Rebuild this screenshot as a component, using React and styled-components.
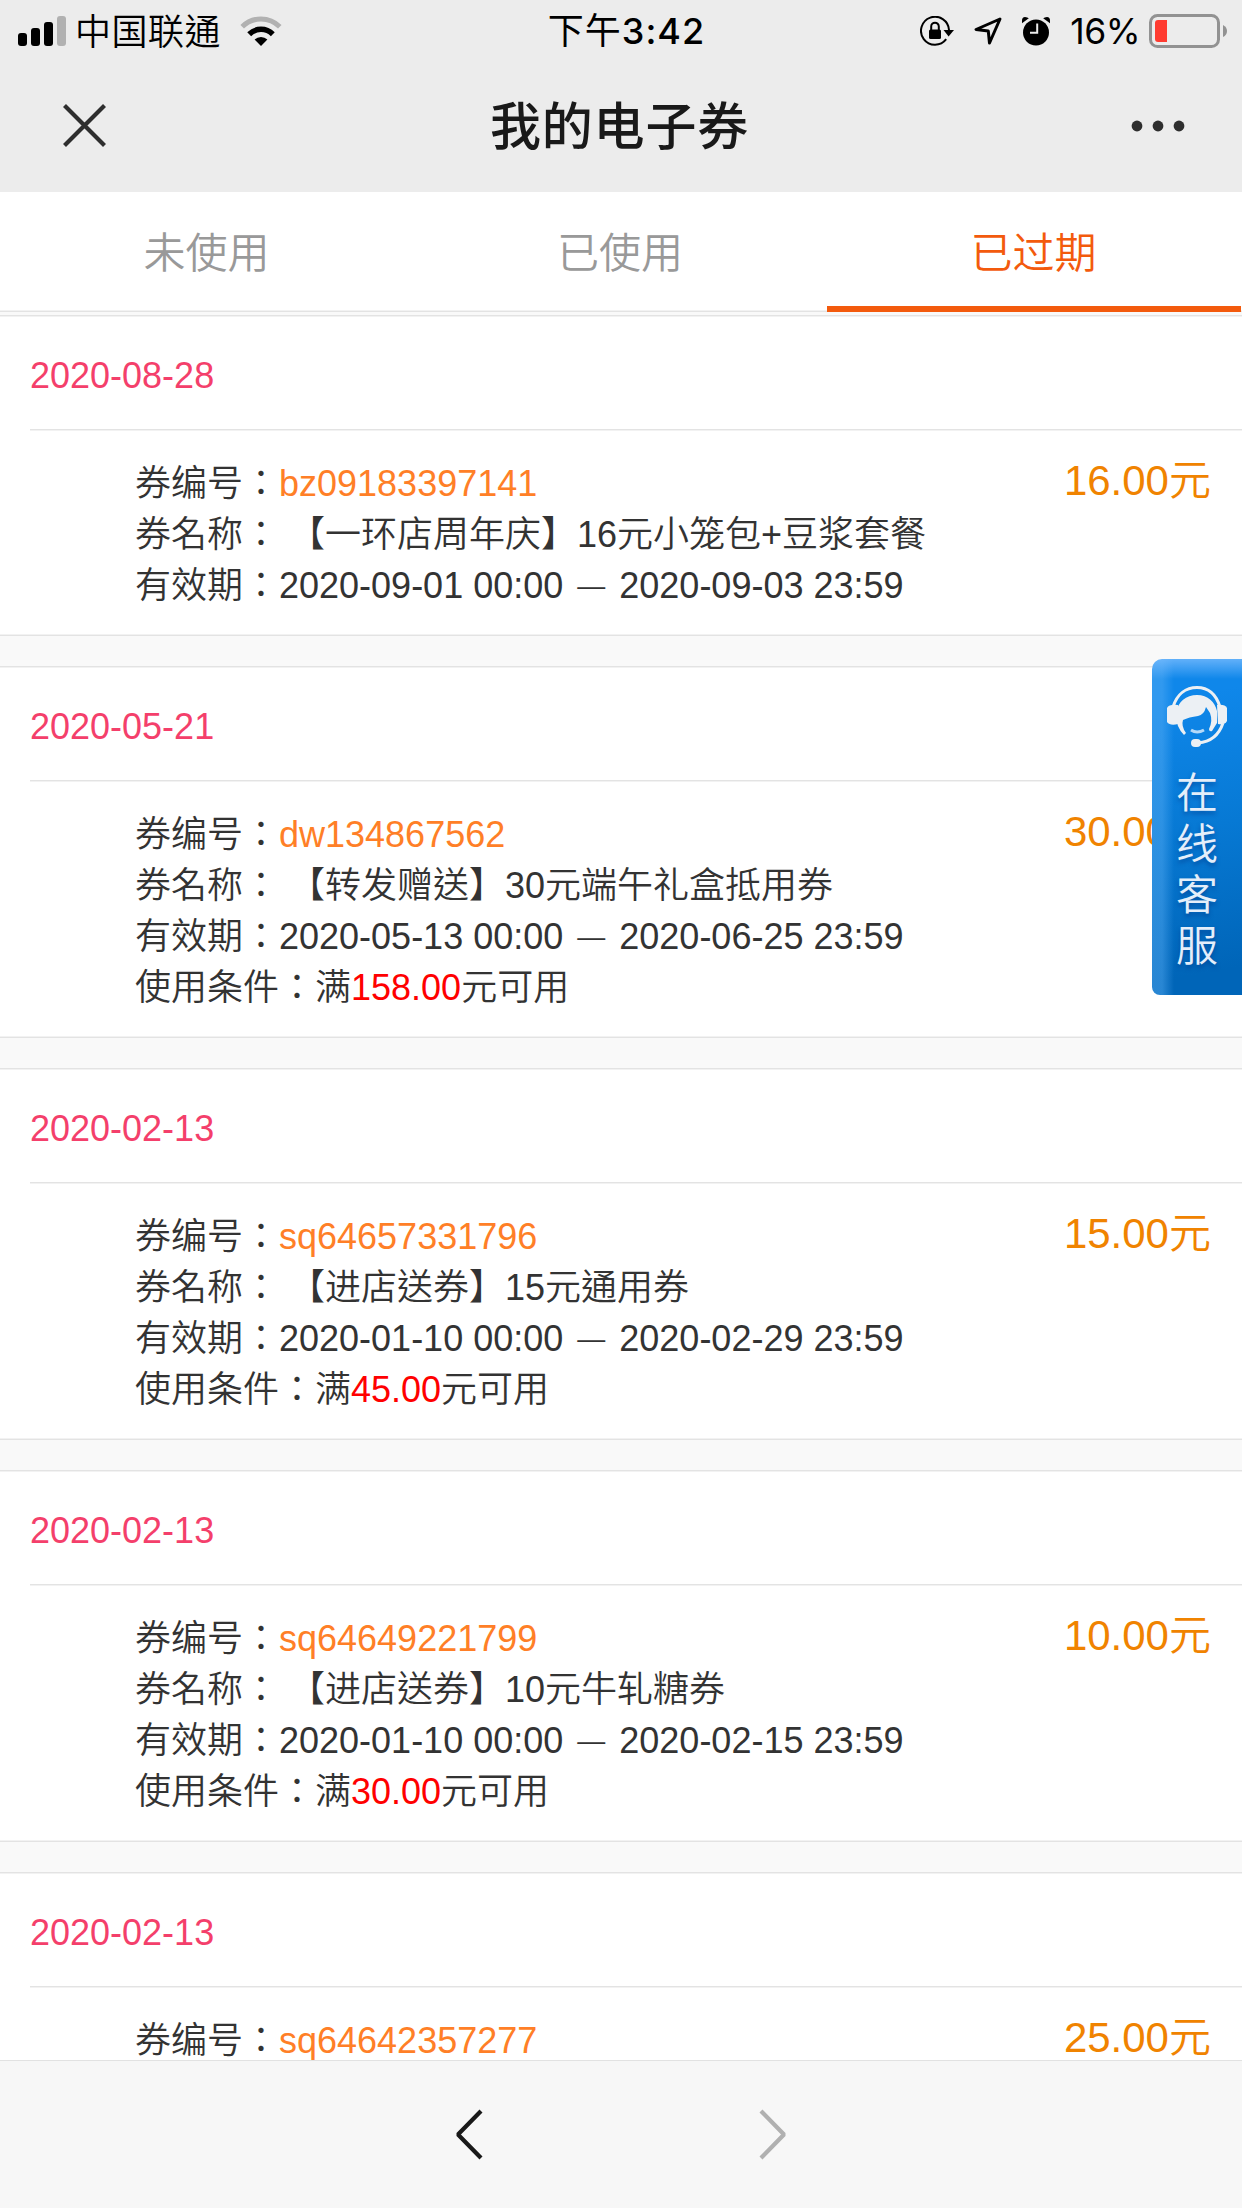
import React from 'react';
import styled, { createGlobalStyle, css } from 'styled-components';

const GlobalStyle = createGlobalStyle`
  * {
    box-sizing: border-box;
  }

  body {
    margin: 0;
    background-color: #f9f9f9;
    color: #333;
    font-family: "Liberation Sans", "Noto Sans CJK TC", sans-serif;
    font-weight: 350;
  }
`;

const Page = styled.div`
  position: relative;
  display: flex;
  flex-direction: column;
  width: 1242px;
  height: 2208px;
  overflow: hidden;
`;

const Header = styled.header`
  flex-shrink: 0;
  height: 192px;
  background-color: #ececec;
`;

const StatusBar = styled.div`
  display: grid;
  grid-template-columns: 1fr auto 1fr;
  align-items: center;
  height: 60px;
  padding: 0 15px 0 18px;
  color: #000;
  font-family: Inter, "Noto Sans CJK TC", sans-serif;
  font-size: 36px;
  font-weight: 400;
  line-height: 60px;
`;

const StatusGroup = styled.div`
  display: flex;
  align-items: center;
  justify-content: ${props => props.$end ? 'flex-end' : 'flex-start'};
`;

const StatusIcons = styled.div`
  display: flex;
  align-items: center;
  gap: 20px;
`;

const Carrier = styled.span`
  margin: 0 19px 0 9px;
  padding-top: 1px;
  font-weight: 350;
  letter-spacing: 0.5px;
`;

const Clock = styled.span`
  padding-left: 8px;
  font-weight: 400;
  letter-spacing: 1px;

  b {
    font-weight: 500;
  }
`;

const Percent = styled.span`
  margin: 0 9px 0 20px;
  padding-top: 2px;
  font-size: 35.5px;
  letter-spacing: -0.5px;
`;

const NavBar = styled.div`
  display: flex;
  align-items: center;
  justify-content: space-between;
  height: 132px;
  padding: 0 57px 0 63px;
`;

const Title = styled.h1`
  margin: 0;
  padding: 3px 0 0 2px;
  color: #191919;
  font-size: 51px;
  font-weight: 500;
  letter-spacing: 0.8px;
  line-height: 129px;
`;

const IconButton = styled.button`
  display: flex;
  padding: 0;
  border: 0;
  background: none;
`;

const Tabs = styled.nav`
  display: flex;
  flex-shrink: 0;
  height: 120px;
  margin-bottom: 3px;
  background-color: #fff;
  box-shadow: inset 0 -1px #e3e3e3, inset 0 -2px #f2f2f2;
`;

const Tab = styled.a`
  width: 414px;
  color: #999;
  font-size: 42px;
  line-height: 123px;
  text-align: center;

  &:first-child {
    width: 413px;
  }

  ${props => props.$active && css`
    padding-right: 1px;
    color: #f35a0d;
    box-shadow: inset 0 -6px #f35a0d;
  `}
`;

const List = styled.main`
  flex: 1;
  min-height: 0;
  overflow: hidden;
`;

const Card = styled.section`
  margin-bottom: 30px;
  padding-left: 30px;
  background-color: #fff;
  box-shadow: inset 0 1px #e3e3e3, inset 0 2px #f2f2f2,
    inset 0 -1px #e3e3e3, inset 0 -2px #f2f2f2;
`;

const CardDate = styled.h2`
  height: 114px;
  margin: 0;
  color: #f43f6b;
  font-size: 36px;
  font-weight: 400;
  line-height: 121px;
`;

const CardBody = styled.div`
  display: flex;
  justify-content: space-between;
  padding: 29px 31px 25px 105px;
  box-shadow: inset 0 1px #e3e3e3, inset 0 2px #f2f2f2;
`;

const Fields = styled.div`
  font-size: 36px;
  line-height: 51px;
`;

const Field = styled.div`
  height: 51px;
  white-space: pre;
`;

const Code = styled.span`
  color: #ff7f27;
`;

const Limit = styled.span`
  color: #f00;
`;

const Dash = styled.span`
  margin: 0 4px;
  font-size: 28px;
  line-height: 0;
  vertical-align: 3px;
`;

const Price = styled.div`
  height: 51px;
  color: #f08300;
  font-size: 42px;
  line-height: 46px;
  white-space: nowrap;
`;

const Service = styled.aside`
  position: absolute;
  top: 659px;
  right: 0;
  display: flex;
  flex-direction: column;
  align-items: center;
  width: 90px;
  height: 336px;
  padding-top: 26px;
  border-radius: 10px 0 0 8px;
  background:
    linear-gradient(180deg, rgba(125, 190, 255, 0.75), rgba(110, 180, 250, 0) 20px),
    linear-gradient(90deg, rgba(90, 175, 245, 0.45) 10px, rgba(90, 175, 245, 0) 22px),
    linear-gradient(170deg, #0f87ea 12%, #0779d4 50%, #0065b8 92%);
`;

const ServiceText = styled.div`
  width: 42px;
  margin-top: 21px;
  color: #e4eefa;
  font-size: 42px;
  line-height: 51px;
  text-align: center;
  text-shadow: 0 3px 4px rgba(0, 50, 130, 0.5);
`;

const Toolbar = styled.footer`
  display: flex;
  flex-shrink: 0;
  align-items: center;
  justify-content: center;
  gap: 276px;
  height: 148px;
  border-top: 1px solid #e2e2e2;
  background-color: #f7f7f7;
`;

const SignalIcon = () => (
  <svg width="48" height="30" viewBox="0 0 48 30">
    <rect x="0" y="17" width="9" height="13" rx="3"/>
    <rect x="13" y="12" width="9" height="18" rx="3"/>
    <rect x="26" y="6" width="9" height="24" rx="3"/>
    <rect x="39" y="0" width="9" height="30" rx="3" fill="#b1b1b1"/>
  </svg>
);

const WifiIcon = () => (
  <svg width="42" height="30" viewBox="0 0 42 30">
    <path d="M2.2 10.8a26.5 26.5 0 0 1 37.6 0" fill="none" stroke="#b1b1b1" strokeWidth="5"/>
    <path d="M9.2 18.2a16.7 16.7 0 0 1 23.600 0" fill="none" stroke="#000" strokeWidth="5.5"/>
    <path d="M21 30l-6.4-6.4a9.2 9.2 0 0 1 12.8 0z"/>
  </svg>
);

const LockIcon = () => (
  <svg width="34" height="30" viewBox="0 0 34 30">
    <path d="M26.2 23.2A14 14 0 1 1 29 14" fill="none" stroke="#000" strokeWidth="2"/>
    <path d="M23.5 14H34l-5.4 6.5z"/>
    <rect x="9" y="13.6" width="12" height="9.4" rx="1.5"/>
    <path d="M11.2 14.5v-4a3.8 3.8 0 0 1 7.6 0v4" fill="none" stroke="#000" strokeWidth="2"/>
  </svg>
);

const LocationIcon = () => (
  <svg width="28" height="28" viewBox="0 0 28 28">
    <path d="M26 2L2 12.5l12.3 1.6L15.5 26z" fill="none" stroke="#000" strokeWidth="3" strokeLinejoin="round"/>
  </svg>
);

const AlarmIcon = () => (
  <svg width="28" height="29" viewBox="0 0 28 29">
    <circle cx="14" cy="15.5" r="13"/>
    <path d="M0 6.3V3.6Q0 0 3 0q2.5.2 3.8 1.3z"/>
    <path d="M28 6.3V3.6Q28 0 25 0q-2.5.2-3.8 1.3z"/>
    <path d="M15.2 6.5v9.2H8" fill="none" stroke="#ececec" strokeWidth="2"/>
  </svg>
);

const BatteryIcon = () => (
  <svg width="78" height="34" viewBox="0 0 78 34">
    <rect x="1.5" y="1.5" width="68" height="31" rx="7" fill="none" stroke="#929292" strokeWidth="3"/>
    <path d="M18 6v22H9q-3 0-3-3V9q0-3 3-3z" fill="#ff3b30"/>
    <path d="M74 11q4 2 4 6t-4 6z" fill="#929292"/>
  </svg>
);

const CloseIcon = () => (
  <svg width="43" height="44" viewBox="0 0 43 44">
    <path d="M1.5 1.5l40 40m0-40l-40 40" fill="none" stroke="#2e2e2e" strokeWidth="4.2"/>
  </svg>
);

const MoreIcon = () => (
  <svg width="54" height="12" viewBox="0 0 54 12" fill="#2e2e2e">
    <circle cx="6" cy="6" r="5.4"/>
    <circle cx="27" cy="6" r="5.4"/>
    <circle cx="48" cy="6" r="5.4"/>
  </svg>
);

const Chevron = ({ color, flip }) => (
  <svg width="27" height="51" viewBox="0 0 27 51">
    <path
      d={flip ? 'M2 2l23 23.5L2 49' : 'M25 2L2 25.5 25 49'}
      fill="none"
      stroke={color}
      strokeWidth="4.2"
      strokeLinejoin="bevel"
    />
  </svg>
);

const HeadsetIcon = () => (
  <svg width="62" height="62" viewBox="0 0 62 62" fill="#ecf0f4">
    <path d="M7 22C11 9 20 2.500 31 2.500S50 9 54 22" fill="none" stroke="#ecf0f4" strokeWidth="3"/>
    <path d="M12 20Q3 19 1 23v14q3 4 11 2z"/>
    <path d="M51 20q8-1 10 3v13q-2 4-9 3z"/>
    <path d="M10 27C12 17 20 10 31 10s18 7 20 16v12l-5 8q-3 1-3-2 4-8 1-16l-4-6q-2 8-8 9-9 1-15 4-2 6 3 13l-2 2q-8-8-8-20z"/>
    <path d="M25 45q6 4 13 0" fill="none" stroke="#b5d9f8" strokeWidth="3"/>
    <path d="M57 38C53 50 44 57 32 58" fill="none" stroke="#ecf0f4" strokeWidth="3"/>
    <rect x="25" y="54" width="10" height="8" rx="4"/>
  </svg>
);

const tabs = ['未使用', '已使用', '已过期'];

const coupons = [
  {
    date: '2020-08-28',
    code: 'bz09183397141',
    name: '【一环店周年庆】16元小笼包+豆浆套餐',
    from: '2020-09-01 00:00',
    to: '2020-09-03 23:59',
    price: '16.00'
  },
  {
    date: '2020-05-21',
    code: 'dw134867562',
    name: '【转发赠送】30元端午礼盒抵用券',
    from: '2020-05-13 00:00',
    to: '2020-06-25 23:59',
    limit: '158.00',
    price: '30.00'
  },
  {
    date: '2020-02-13',
    code: 'sq64657331796',
    name: '【进店送券】15元通用券',
    from: '2020-01-10 00:00',
    to: '2020-02-29 23:59',
    limit: '45.00',
    price: '15.00'
  },
  {
    date: '2020-02-13',
    code: 'sq64649221799',
    name: '【进店送券】10元牛轧糖券',
    from: '2020-01-10 00:00',
    to: '2020-02-15 23:59',
    limit: '30.00',
    price: '10.00'
  },
  {
    date: '2020-02-13',
    code: 'sq64642357277',
    price: '25.00'
  }
];

const Coupon = ({ date, code, name, from, to, limit, price }) => (
  <Card>
    <CardDate>{date}</CardDate>
    <CardBody>
      <Fields>
        <Field>券编号：<Code>{code}</Code></Field>
        {name && <Field>券名称： {name}</Field>}
        {from && <Field>有效期：{from} <Dash>—</Dash> {to}</Field>}
        {limit && <Field>使用条件：满<Limit>{limit}</Limit>元可用</Field>}
      </Fields>
      <Price>{price}元</Price>
    </CardBody>
  </Card>
);

const App = () => (
  <Page>
    <GlobalStyle/>
    <Header>
      <StatusBar>
        <StatusGroup>
          <SignalIcon/>
          <Carrier>中国联通</Carrier>
          <WifiIcon/>
        </StatusGroup>
        <Clock>下午<b>3:42</b></Clock>
        <StatusGroup $end>
          <StatusIcons>
            <LockIcon/>
            <LocationIcon/>
            <AlarmIcon/>
          </StatusIcons>
          <Percent>16%</Percent>
          <BatteryIcon/>
        </StatusGroup>
      </StatusBar>
      <NavBar>
        <IconButton><CloseIcon/></IconButton>
        <Title>我的电子券</Title>
        <IconButton><MoreIcon/></IconButton>
      </NavBar>
    </Header>
    <Tabs>
      {tabs.map(tab => (
        <Tab key={tab} $active={tab === '已过期'}>{tab}</Tab>
      ))}
    </Tabs>
    <List>
      {coupons.map(coupon => <Coupon key={coupon.code} {...coupon}/>)}
    </List>
    <Service>
      <HeadsetIcon/>
      <ServiceText>在线客服</ServiceText>
    </Service>
    <Toolbar>
      <IconButton><Chevron color="#191919"/></IconButton>
      <IconButton><Chevron color="#b0b0b0" flip/></IconButton>
    </Toolbar>
  </Page>
);

export default App;
